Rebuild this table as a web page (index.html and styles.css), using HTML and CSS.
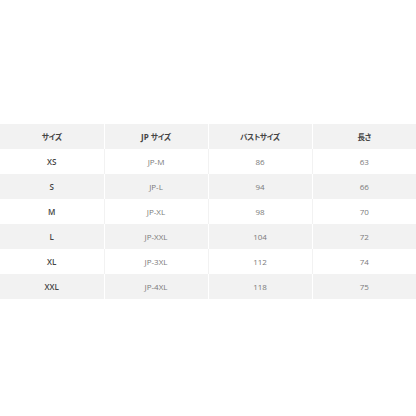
FILE: index.html
```html
<!DOCTYPE html>
<html lang="ja">
<head>
<meta charset="utf-8">
<link rel="stylesheet" href="styles.css">
</head>
<body>
<table class="size-table">
  <thead>
    <tr><th><span class="ja">サイズ</span></th><th>JP <span class="ja">サイズ</span></th><th><span class="ja">バストサイズ</span></th><th><span class="ja">長さ</span></th></tr>
  </thead>
  <tbody>
    <tr><td class="size">XS</td><td>JP-M</td><td>86</td><td>63</td></tr>
    <tr><td class="size">S</td><td>JP-L</td><td>94</td><td>66</td></tr>
    <tr><td class="size">M</td><td>JP-XL</td><td>98</td><td>70</td></tr>
    <tr><td class="size">L</td><td>JP-XXL</td><td>104</td><td>72</td></tr>
    <tr><td class="size">XL</td><td>JP-3XL</td><td>112</td><td>74</td></tr>
    <tr><td class="size">XXL</td><td>JP-4XL</td><td>118</td><td>75</td></tr>
  </tbody>
</table>
</body>
</html>
```
FILE: styles.css
```css
html, body {
  margin: 0;
  padding: 0;
  background: #ffffff;
}
body {
  padding-top: 124px;
  font-family: "Open Sans", "Noto Sans CJK JP", sans-serif;
}
.size-table {
  width: 416px;
  border-collapse: collapse;
  table-layout: fixed;
}
.size-table th,
.size-table td {
  height: 25px;
  padding: 0;
  text-align: center;
  vertical-align: middle;
  font-size: 8px;
  border-right: 1px solid #f2f2f2;
}
.size-table th:last-child,
.size-table td:last-child {
  border-right: none;
}
.size-table th {
  background: #f2f2f2;
  color: #444;
  font-weight: 700;
  border-right-color: #ffffff;
}
.ja {
  font-family: "Noto Sans CJK JP", sans-serif;
  font-feature-settings: "palt";
  font-size: 7.5px;
  letter-spacing: -0.3px;
}
.size-table td {
  color: #7a7a7a;
}
.size-table td.size {
  color: #444;
  font-weight: 600;
}
.size-table tbody tr:nth-child(even) td {
  background: #f2f2f2;
  border-right-color: #ffffff;
}
.size-table tbody tr:nth-child(even) td:last-child {
  border-right: none;
}
```
